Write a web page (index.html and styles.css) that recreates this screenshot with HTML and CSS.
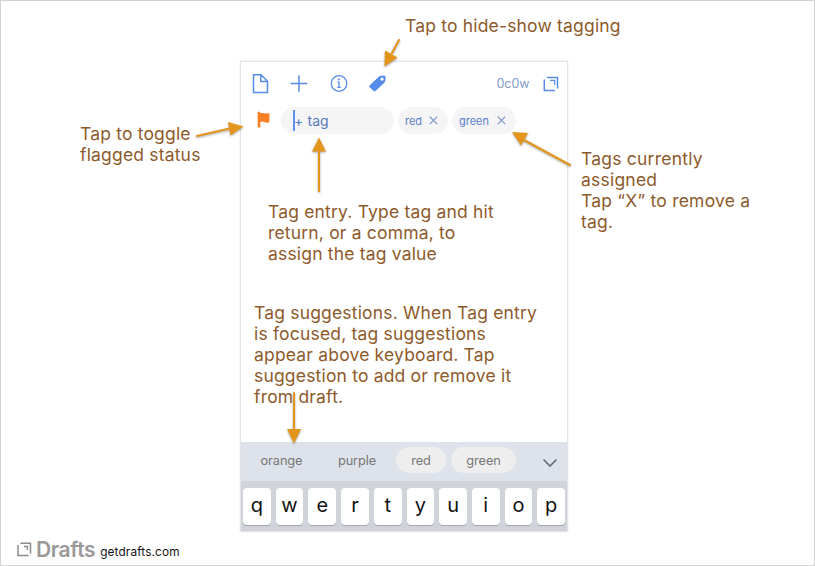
FILE: index.html
```
<!DOCTYPE html>
<html lang="en">
<head>
<meta charset="utf-8">
<title>Drafts tagging</title>
<link rel="stylesheet" href="styles.css">
</head>
<body>
<div class="sheet">
  <main class="phone">
    <div class="toolbar">
      <svg class="icon" width="20" height="22" viewBox="0 0 20 22"><path d="M3.500 1.8H11L17.500 8.3V19.4H3.500ZM10.8 2V8.500H17.200"/></svg>
      <svg class="icon" width="20" height="22" viewBox="0 0 20 22"><path d="M1.8 10.5H18.300M10 2.3V18.8"/></svg>
      <svg class="icon info" width="20" height="22" viewBox="0 0 20 22"><circle cx="10" cy="10.5" r="7.8"/><path d="M10 9V14.3M8.500 9H10M8.3 14.3H11.7"/><circle class="dot" cx="9.8" cy="6.6" r="1"/></svg>
      <svg class="icon solid" width="20" height="22" viewBox="0 0 20 22"><path fill-rule="evenodd" d="M1.600 12.500L10.5 4Q11.300 3.200 12.300 3L15.700 2.500Q17.800 2.500 17.700 4.500L17.200 8Q17 9 16.300 9.800L7.8 17.700Q6.500 18.700 5.400 17.700L1.600 14.300Q.7 13.400 1.600 12.500ZM14 4.600a1.600 1.600 0 1 0 .1 0Z"/></svg>
      <span class="count">0c0w</span>
      <svg class="icon expand" width="16" height="16" viewBox="0 0 16 16"><path d="M4 1.5H14.5V12.5M1.3 3.5V14.5H12"/><path class="thin" d="M7 4.3H11.7V9"/></svg>
    </div>
    <div class="tags">
      <svg class="flag" width="14" height="18" viewBox="0 0 14 18"><path d="M.6 1.2Q1.8 0 3 1.2V2Q5.2 1.3 7 2.2T12.4 2V11Q9.8 12.2 7.4 11.1T3.4 11V16Q2 17.5.8 16Z"/></svg>
      <div class="entry"><i class="caret"></i><span>+ tag</span></div>
      <div class="tag red"><span>red</span><svg width="9" height="9" viewBox="0 0 9 9"><path d="M.7.7L8.2 8.2M8.2.7L.7 8.2"/></svg></div>
      <div class="tag green"><span>green</span><svg width="9" height="9" viewBox="0 0 9 9"><path d="M.7.7L8.2 8.2M8.2.7L.7 8.2"/></svg></div>
    </div>
    <div class="suggestions">
      <span class="s-orange">orange</span><span class="s-purple">purple</span><span class="s-red on">red</span><span class="s-green on">green</span>
      <svg class="chevron" width="16" height="10" viewBox="0 0 16 10"><path d="M1.5 1.5L8 8L14.5 1.5"/></svg>
    </div>
    <div class="keys"><b>q</b><b>w</b><b>e</b><b>r</b><b>t</b><b>y</b><b>u</b><b>i</b><b>o</b><b>p</b></div>
  </main>
  <footer class="brand">
    <svg width="15" height="15" viewBox="0 0 15 15"><path d="M3.5 1.2H13.5V11.5M1 3V13.6H11.5"/><path d="M7 4.5H10.4V8"/></svg>
    <strong>Drafts</strong><span>getdrafts.com</span>
  </footer>

  <p class="note hide-show">Tap to hide-show tagging</p>
  <p class="note flagged">Tap to toggle<br>flagged status</p>
  <p class="note assigned">Tags currently<br>assigned<br>Tap “X” to remove a<br>tag.</p>
  <p class="note tag-entry">Tag entry. Type tag and hit<br>return, or a comma, to<br>assign the tag value</p>
  <p class="note suggest">Tag suggestions. When Tag entry<br>is focused, tag suggestions<br>appear above keyboard. Tap<br>suggestion to add or remove it<br>from draft.</p>
  <svg class="arrows" width="815" height="566" viewBox="0 0 815 566">
    <path class="shaft" d="M399 40L392 53M197 136L230 128.5M319 191V150M570 165L524 140M294 393V430"/>
    <path class="head" d="M384.500 66.500L385 50.500L397.500 57.500ZM243.500 126.500L228 122L230.500 135.500ZM319 137.500L312 151.500H326ZM512 132L528 133L521 145.500ZM294 443.500L287 429H301Z"/>
  </svg>
</div>
</body>
</html>
```
FILE: styles.css
```
* { box-sizing: border-box; }
body { margin: 0; background: #fff; font-family: Inter, "Liberation Sans", sans-serif; }
.sheet { position: relative; width: 815px; height: 566px; border: 1px solid #d2d2d2; overflow: hidden; padding: 60px 0 0 239px; }
svg { display: block; flex: none; fill: none; }

.phone { width: 328px; height: 471px; border: 1px solid #e4e4e6; box-shadow: 0 0 2px #e5e5e5; display: flex; flex-direction: column; }
.toolbar { height: 44px; padding: 11px 8px 0 9px; display: flex; align-items: flex-start; gap: 19.400px; }
.icon { stroke: #568ce9; stroke-width: 1.5; }
.info { stroke-width: 1.3; }
.icon .dot, .solid { fill: #568ce9; stroke: none; }
.icon .thin { stroke-width: 1.2; }
.count { margin-left: auto; margin-right: -6px; font-size: 12.500px; line-height: 22px; color: #829bce; }
.expand { margin-top: 3px; }

.tags { height: 29px; padding: 1px 0 0 16px; display: flex; color: #5b80c8; }
.flag { margin-top: 4px; fill: #fb7f25; }
.entry { display: flex; align-items: center; width: 113px; height: 27px; margin-left: 10px; padding-left: 12px; border-radius: 14px; background: #f5f5f5; font-size: 14px; letter-spacing: .1px; color: #5579bd; }
.entry span { margin-top: -1px; }
.caret { width: 2px; height: 21px; background: #5c92ed; margin-right: -1px; }
.tag { display: flex; align-items: center; justify-content: space-between; height: 27px; margin-left: 4px; padding: 0 10px 0 7px; border-radius: 14px; background: #f5f5f5; font-size: 11px; }
.tag svg { stroke: #7794cb; stroke-width: 1.2; }
.red { width: 50px; }
.green { width: 64px; }

.suggestions { margin-top: auto; height: 39px; display: flex; align-items: center; background: #dee2eb; font-size: 12.800px; letter-spacing: -.1px; color: #777; }
.suggestions span { height: 26px; line-height: 27px; text-align: center; border-radius: 13px; margin-top: -3px; }
.suggestions .on { background: #eee; }
.s-orange { width: 81px; }
.s-purple { width: 70px; }
.s-red { width: 50px; margin-left: 4px; }
.s-green { width: 65px; margin-left: 5px; }
.chevron { margin: 2px 0 0 26px; stroke: #666a72; stroke-width: 1.6; }
.keys { height: 50px; padding: 7px 2px 0; display: flex; gap: 5px; background: #d0d3da; }
.keys b { flex: 1; height: 37px; border-radius: 4px; background: #fff; box-shadow: 0 1px 0 #a4a7ad; font-size: 20px; line-height: 34px; font-weight: 400; text-align: center; color: #111; }

.brand { display: flex; align-items: center; margin: 5px 0 0 -223px; height: 24px; font-size: 11.800px; letter-spacing: .15px; color: #111; }
.brand svg { stroke: #8a8a8a; stroke-width: 1.5; }
.brand strong { margin: 0 5px 0 4px; font-size: 21px; letter-spacing: -.4px; font-weight: 600; color: #999; }
.brand span { margin-top: 6px; }

.note { position: absolute; margin: 0; font-size: 17.500px; line-height: 21px; letter-spacing: .18px; color: #8e5a2c; white-space: nowrap; }
.hide-show { left: 404px; top: 14px; }
.flagged { left: 79px; top: 122px; }
.assigned { left: 580px; top: 147px; letter-spacing: .22px; }
.tag-entry { left: 267px; top: 200px; }
.suggest { left: 253px; top: 301px; }
.arrows { position: absolute; left: -1px; top: -1px; filter: drop-shadow(0 1px 1px rgba(70, 70, 70, .5)); }
.shaft { stroke: #e3961b; stroke-width: 2; stroke-linecap: round; }
.head { fill: #e3961b; }
```
